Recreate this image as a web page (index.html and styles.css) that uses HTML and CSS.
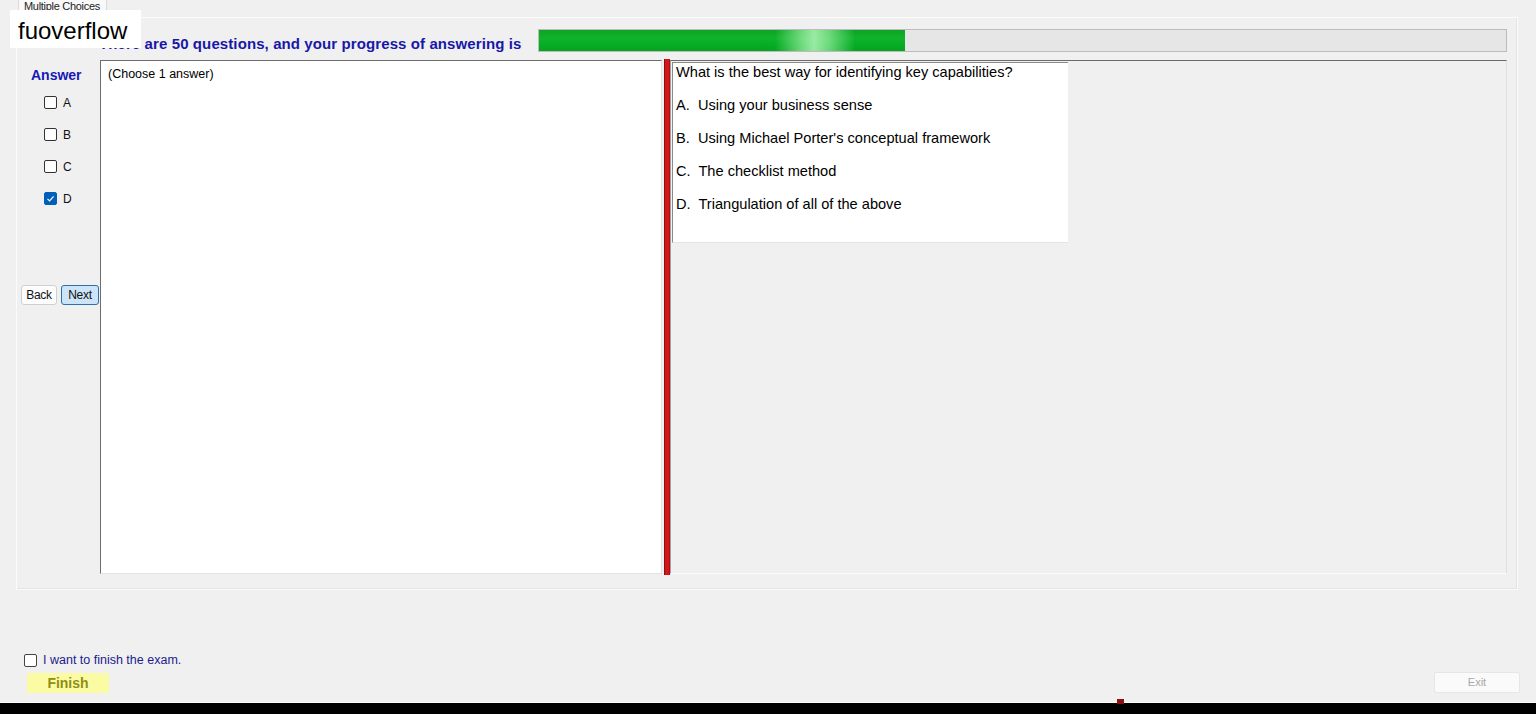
FILE: index.html
```html
<html>
<head>
	<title>Multiple Choices</title>
	<link rel="stylesheet" href="styles.css">
</head>
<body>
	<div class="watermark">fuoverflow</div>

	<div class="tab">Multiple Choices</div>

	<div class="panel">
		<div class="head">
			<h1 class="title">There are 50 questions, and your progress of answering is</h1>
			<div class="progress"><div class="fill" style="width:37.8%"></div></div>
		</div>

		<div class="main">
			<div class="side">
				<div class="answer">Answer</div>
				<div class="choices">
					<label class="choice"><span class="box"></span>A</label>
					<label class="choice"><span class="box"></span>B</label>
					<label class="choice"><span class="box"></span>C</label>
					<label class="choice"><span class="box checked"><svg viewBox="0 0 13 13" width="13" height="13"><path d="M3.5 6.8 L5.6 8.9 L9.6 4.4" fill="none" stroke="#fff" stroke-width="1.2"/></svg></span>D</label>
				</div>
				<div class="nav">
					<button class="btn">Back</button>
					<button class="btn btn-next">Next</button>
				</div>
			</div>

			<div class="notes">(Choose 1 answer)</div>

			<div class="splitter"></div>

			<div class="viewer">
				<div class="question">
					<p>What is the best way for identifying key capabilities?</p>
					<p>A.&nbsp; Using your business sense</p>
					<p>B.&nbsp; Using Michael Porter's conceptual framework</p>
					<p>C.&nbsp; The checklist method</p>
					<p>D.&nbsp; Triangulation of all of the above</p>
				</div>
			</div>
		</div>
	</div>

	<div class="footer">
		<label class="finish-check"><span class="box"></span>I want to finish the exam.</label>
		<div class="actions">
			<button class="btn-finish">Finish</button>
			<button class="btn-exit">Exit</button>
		</div>
	</div>

	<div class="taskbar"><span class="mark"></span></div>
</body>
</html>
```

FILE: styles.css
```css
body {
	margin:0;
	height:714px;
	overflow:hidden;
	background-color:#f0f0f0;
	font-family:"Liberation Sans", Arial, sans-serif;
	font-size:12px;
	color:#000;
	position:relative;
}
.watermark {
	position:absolute;
	left:10px;
	top:10px;
	height:38px;
	width:131px;
	box-sizing:border-box;
	padding:8px 0 0 8px;
	background:#fff;
	font-size:24px;
	line-height:26px;
	color:#000;
}
.tab {
	margin-left:18px;
	width:89px;
	height:17px;
	box-sizing:border-box;
	padding-left:5px;
	background:#f9f9f9;
	border:1px solid #dadada;
	border-bottom:none;
	border-top:none;
	font-size:11px;
	line-height:13px;
	color:#222;
	letter-spacing:-0.3px;
}
.panel {
	margin-left:16px;
	width:1502px;
	height:573px;
	box-sizing:border-box;
	border:1px solid #fbfbfb;
	box-shadow:inset -1px -1px 0 #e3e3e3;
}
.head {
	display:flex;
	height:42px;
}
.title {
	margin:0;
	padding:17px 0 0 82px;
	width:521px;
	flex:none;
	box-sizing:border-box;
	font-size:15px;
	line-height:17px;
	font-weight:bold;
	letter-spacing:0.1px;
	color:#1818a8;
	white-space:nowrap;
}
.progress {
	margin-top:11px;
	width:969px;
	height:23px;
	box-sizing:border-box;
	border:1px solid #bcbcbc;
	background:#e6e6e6;
}
.fill {
	height:100%;
	background:
		linear-gradient(to right, rgba(255,255,255,0) 0, rgba(255,255,255,0) 236px, rgba(190,255,195,0.55) 262px, rgba(200,255,205,0.75) 275px, rgba(190,255,195,0.55) 290px, rgba(255,255,255,0) 316px),
		linear-gradient(to bottom, #0aa524 0, #12b22c 40%, #06b025 60%, #07a321 100%);
}
.main {
	display:flex;
	height:515px;
	padding-right:10px;
}
.side {
	width:83px;
	padding-top:7px;
	box-sizing:border-box;
}
.answer {
	padding-left:14px;
	font-size:14px;
	line-height:16px;
	font-weight:bold;
	color:#1818b4;
}
.choices {
	margin-top:13px;
	display:flex;
	flex-direction:column;
	gap:19px;
	padding-left:27px;
}
.choice {
	display:flex;
	align-items:center;
	gap:6px;
	height:13px;
	font-size:12px;
	color:#111;
}
.box {
	width:13px;
	height:13px;
	box-sizing:border-box;
	border:1px solid #333;
	border-radius:2px;
	background:#fff;
	display:inline-block;
	flex:none;
}
.box.checked {
	border-color:#005fb8;
	background:#005fb8;
}
.box svg {
	display:block;
	margin:-1px;
}
.nav {
	margin-top:80px;
	padding-left:4px;
	display:flex;
	gap:4px;
}
.btn {
	height:20px;
	width:36px;
	padding:0;
	box-sizing:border-box;
	border:1px solid #d0d0d0;
	border-radius:3px;
	background:#fdfdfd;
	font-family:"Liberation Sans", Arial, sans-serif;
	font-size:12px;
	letter-spacing:-0.3px;
	color:#111;
}
.btn-next {
	width:38px;
	background:#cce4f7;
	border-color:#2f6fa8;
}
.notes {
	width:562px;
	height:514px;
	box-sizing:border-box;
	padding:6px 7px;
	background:#fff;
	border-top:1px solid #6d6d6d;
	border-left:1px solid #6d6d6d;
	border-right:1px solid #e3e3e3;
	border-bottom:1px solid #e3e3e3;
	font-size:12.5px;
	line-height:14px;
}
.splitter {
	margin-left:2px;
	margin-top:-1px;
	width:6px;
	height:516px;
	box-sizing:border-box;
	background:#d2161b;
	border-left:1px solid #8e0d10;
	border-right:1px solid #b01014;
}
.viewer {
	flex:1;
	height:514px;
	box-sizing:border-box;
	padding:1px 0 0 1px;
	border-top:1px solid #6a6a6a;
	border-bottom:1px solid #fbfbfb;
	border-right:1px solid #e0e0e0;
	border-left:1px solid #a0a0a0;
}
.question {
	width:396px;
	height:181px;
	box-sizing:border-box;
	padding:1px 0 0 3px;
	background:#fff;
	border-top:1px solid #8a8a8a;
	border-left:1px solid #8a8a8a;
	border-bottom:1px solid #e4e4e4;
	font-size:14.6px;
	line-height:17px;
}
.question p {
	margin:0 0 16px 0;
}
.footer {
	padding:62px 16px 0 24px;
	height:112px;
	box-sizing:border-box;
}
.finish-check {
	display:flex;
	align-items:center;
	gap:6px;
	height:14px;
	color:#1c1c8e;
	font-size:12.5px;
	line-height:16px;
	padding-top:1px;
}
.finish-check .box {
	border-color:#444;
}
.actions {
	margin-top:5px;
	display:flex;
	justify-content:space-between;
	align-items:flex-start;
}
.btn-finish {
	margin-left:3px;
	margin-top:1px;
	width:82px;
	height:20px;
	padding:0;
	border:none;
	border-radius:2px;
	background:#fbfba4;
	font-family:"Liberation Sans", Arial, sans-serif;
	font-size:14px;
	font-weight:bold;
	color:#8f8f12;
}
.btn-exit {
	width:86px;
	height:21px;
	padding:0 0 2px 0;
	box-sizing:border-box;
	border:1px solid #e6e6e6;
	border-radius:2px;
	background:#fafafa;
	font-family:"Liberation Sans", Arial, sans-serif;
	font-size:11px;
	color:#a8a8a8;
}
.taskbar {
	height:12px;
	background:#000;
	border-top:1px solid #fafafa;
	display:flex;
}
.mark {
	margin-left:1117px;
	margin-top:-4px;
	width:7px;
	height:5px;
	background:#8a1010;
}
```
